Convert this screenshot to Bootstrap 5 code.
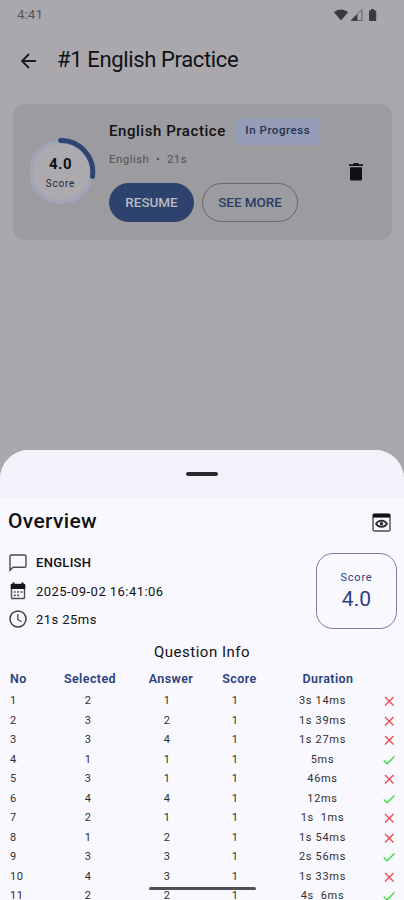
<!DOCTYPE html>
<html lang="en">
<head>
<meta charset="utf-8">
<meta name="viewport" content="width=device-width, initial-scale=1">
<title>English Practice</title>
<link rel="stylesheet" href="https://cdn.jsdelivr.net/npm/bootstrap@5.3.0/dist/css/bootstrap.min.css">
<style>
  body { background:#aaa8ac; font-family:Roboto,"Liberation Sans",sans-serif; color:#111114; }
  svg { display:block; flex:none; }
  .screen { width:404px; height:900px; }
  .backdrop-part { height:450px; }
  .status { height:29px; padding:0 26px 0 17px; font-size:13.5px; color:#58575b; letter-spacing:0; }
  .topbar { height:63px; padding-left:18px; gap:17px; }
  .topbar h1 { font-size:22px; font-weight:400; letter-spacing:-.36px; }
  .quiz { margin:11.5px 12px 0 13px; height:136.5px; border-radius:11px; background:#9c9b9f; padding:0 27px 0 17px; }
  .ring { width:68px; height:68px; }
  .ring-text { padding:2px 7px 0 0; }
  .ring-num { font-size:15px; font-weight:700; line-height:18px; letter-spacing:.5px; }
  .ring-label { font-size:10px; line-height:14px; letter-spacing:.8px; margin-top:4px; color:#29292d; }
  .quiz-info { margin-left:11px; padding-top:14px; }
  .quiz-title { font-size:15px; font-weight:500; letter-spacing:.55px; padding-top:1px; }
  .state { width:84px; height:27px; background:#959db6; color:#26324f; font-size:11.5px; font-weight:500; letter-spacing:.55px; margin-left:10px; }
  .meta { font-size:11.5px; line-height:16px; color:#525155; letter-spacing:.45px; margin-top:6px; white-space:pre; }
  .pill { height:39px; padding:0; font-size:13.5px; letter-spacing:-.05px; border:1px solid #67676d; color:#2b3e68; }
  .pill-fill { width:85px; background:#2e426e; border-color:#2e426e; color:#b9bbc4; font-weight:500; }
  .pill-line { width:96px; font-weight:500; }
  .sheet { height:450px; border-radius:29px 29px 0 0; background:#f9f8fe; }
  .grab { height:48px; background:#f3f2fb; }
  .grab span { width:32px; height:4px; background:#29292f; }
  .overview { height:48px; padding:0 13px 0 8px; }
  .overview h2 { font-size:21px; font-weight:500; letter-spacing:.35px; }
  .facts { padding:7px 7px 0 8px; }
  .fact-list { margin-top:-4px; }
  .fact { height:28.2px; gap:8px; font-size:13px; letter-spacing:.45px; }
  .fact-caps { letter-spacing:.3px; }
  .score-box { width:81px; height:76px; border:1px solid #737da6; border-radius:17px; color:#2c4381; }
  .score-box small { font-size:11px; line-height:14px; letter-spacing:.8px; }
  .score-box b { font-size:21px; line-height:25px; font-weight:400; letter-spacing:.1px; margin-top:2px; }
  .q-title { font-size:15px; line-height:20px; letter-spacing:.5px; margin-top:8px; }
  .q-row { display:grid; grid-template-columns:37px 86px 76px 61px 116px 6px; padding-left:10px; height:19.5px; align-items:center; text-align:center; font-size:11px; letter-spacing:.5px; color:#303034; }
  .q-head { height:20px; margin-top:8px; margin-bottom:2px; font-size:12.5px; font-weight:600; letter-spacing:.42px; color:#28417f; }
  .q-row > :first-child { text-align:left; }
  .q-data > :nth-child(2) { padding-right:4px; }
  .q-data > :nth-child(3) { padding-right:8px; }
  .q-data > :nth-child(4) { padding-right:9px; }
  .q-data > :nth-child(5) { padding-right:11px; white-space:pre; letter-spacing:.7px; }
  .q-data > :nth-child(6) { margin-left:-3px; }
  .homebar { left:149px; bottom:10px; width:107px; height:3px; background:#505055; }
</style>
<script src="https://cdn.jsdelivr.net/npm/bootstrap@5.3.0/dist/js/bootstrap.bundle.min.js"></script>
</head>
<body class="overflow-hidden">
<main class="screen position-relative overflow-hidden">
  <div class="backdrop-part">
    <div class="status d-flex align-items-center justify-content-between">
      <span>4:41</span>
      <svg width="44" height="14" viewBox="0 0 44 14" fill="#3a393d"><path d="M0 4.2C4 .5 10 .5 14 4.2L7 12.5z"/><path d="M17 12.5 28 1.5v11z" fill="none" stroke="#626165" stroke-width="1"/><path d="M17 12.5 23.5 6v6.5z"/><path d="M35 2.4h2V1h3v1.4h2.2V13H35z"/></svg>
    </div>
    <header class="topbar d-flex align-items-center">
      <svg width="22" height="22" viewBox="0 0 22 22" fill="none" stroke="#19191c" stroke-width="1.8"><path d="M18 11H4M11 4l-7 7 7 7"/></svg>
      <h1 class="mb-0">#1 English Practice</h1>
    </header>
    <section class="quiz d-flex align-items-center">
      <div class="ring position-relative">
        <svg class="position-absolute" width="68" height="68" viewBox="0 0 68 68" fill="none"><circle cx="31" cy="34" r="30" fill="#acaaaf" stroke="#a1a5b6" stroke-width="4"/><path d="M30.5 2.5A31.8 31.8 0 0 1 62.5 38.5" stroke="#2e4573" stroke-width="5" stroke-linecap="round"/></svg>
        <div class="ring-text position-relative d-flex flex-column align-items-center justify-content-center h-100">
          <span class="ring-num">4.0</span><span class="ring-label">Score</span>
        </div>
      </div>
      <div class="quiz-info align-self-start flex-grow-1">
        <div class="d-flex align-items-center text-nowrap">
          <span class="quiz-title">English Practice</span>
          <span class="state d-flex align-items-center justify-content-center">In Progress</span>
        </div>
        <div class="meta">English  •  21s</div>
        <div class="d-flex gap-2 mt-3">
          <button class="btn rounded-pill pill pill-fill">RESUME</button>
          <button class="btn rounded-pill pill pill-line">SEE MORE</button>
        </div>
      </div>
      <svg width="18" height="20" viewBox="0 0 18 20" fill="#111114"><path d="M2 2.3h4L7 1h4l1 1.3h4V4H2zM3 5.3h12V17a1.5 1.5 0 0 1-1.5 1.5h-9A1.5 1.5 0 0 1 3 17z"/></svg>
    </section>
  </div>

  <section class="sheet overflow-hidden">
    <div class="grab d-flex align-items-center justify-content-center"><span class="rounded-pill"></span></div>
    <div class="overview d-flex align-items-center justify-content-between">
      <h2 class="mb-0">Overview</h2>
      <svg width="19" height="19" viewBox="0 0 19 19" fill="none" stroke="#29292d"><rect x="1" y="1" width="17" height="17" rx="1.6" stroke-width="1.4" stroke="#4b4b50"/><path d="M1 2.8h17" stroke-width="3.6" stroke="#111"/><path d="M4 10.8c2.7-4.2 8.3-4.2 11 0-2.7 4.2-8.3 4.2-11 0z" stroke-width="1.7"/><circle cx="9.5" cy="10.8" r="1.7" fill="#222" stroke="none"/></svg>
    </div>
    <div class="facts d-flex justify-content-between">
      <div class="fact-list">
        <div class="fact fact-caps d-flex align-items-center fw-medium"><svg width="20" height="20" viewBox="0 0 20 20" fill="none" stroke="#4b4b50" stroke-width="1.4"><path d="M2 17.2V3.2Q2 2 3.2 2h13.6Q18 2 18 3.2v9.8q0 1.2-1.2 1.2H5z"/></svg><span>ENGLISH</span></div>
        <div class="fact d-flex align-items-center"><svg width="20" height="20" viewBox="0 0 20 20" fill="none"><rect x="3.5" y="3.5" width="13" height="14" rx="1" stroke="#4b4b50" stroke-width="1.4"/><path d="M2.8 3h1.7V1.5h2V3h7V1.5h2V3h1.7v5H2.8z" fill="#161619"/><path d="M5.7 11h9M5.7 14.3h6" stroke="#4b4b50" stroke-width="1.7" stroke-dasharray="2 1.4"/></svg><span>2025-09-02 16:41:06</span></div>
        <div class="fact d-flex align-items-center"><svg width="20" height="20" viewBox="0 0 20 20" fill="none" stroke="#3d3d42" stroke-width="1.5"><circle cx="10" cy="10" r="8"/><path d="M9.8 5v5.4l3.8 2.4" stroke-width="1.2"/></svg><span>21s 25ms</span></div>
      </div>
      <div class="score-box d-flex flex-column align-items-center justify-content-center"><small>Score</small><b>4.0</b></div>
    </div>
    <h3 class="q-title text-center fw-normal mb-0">Question Info</h3>
    <div class="q-row q-head"><span>No</span><span>Selected</span><span>Answer</span><span>Score</span><span>Duration</span></div>
    <div id="answers"></div>
  </section>
  <div class="homebar position-absolute rounded-pill"></div>
</main>
<script>
  const answers = [
    [2, 1, '3s 14ms', 0], [3, 2, '1s 39ms', 0], [3, 4, '1s 27ms', 0], [1, 1, '5ms', 1],
    [3, 1, '46ms', 0], [4, 4, '12ms', 1], [2, 1, '1s  1ms', 0], [1, 2, '1s 54ms', 0],
    [3, 3, '2s 56ms', 1], [4, 3, '1s 33ms', 0], [2, 2, '4s  6ms', 1]
  ];
  const cross = '<svg width="12" height="12" viewBox="0 0 12 12" fill="none" stroke="#ee4c4c" stroke-width="1.4"><path d="M2 2l8.5 8.5M10.5 2 2 10.5"/></svg>';
  const check = '<svg width="12" height="12" viewBox="0 0 12 12" fill="none" stroke="#3edc4a" stroke-width="1.5"><path d="M.7 6.5 4.2 9.7 11.5 2.5"/></svg>';
  document.getElementById('answers').innerHTML = answers.map(([sel, ans, time, ok], i) =>
    `<div class="q-row q-data"><span>${i + 1}</span><span>${sel}</span><span>${ans}</span><span>1</span><span>${time}</span><span>${ok ? check : cross}</span></div>`
  ).join('');
</script>
</body>
</html>
